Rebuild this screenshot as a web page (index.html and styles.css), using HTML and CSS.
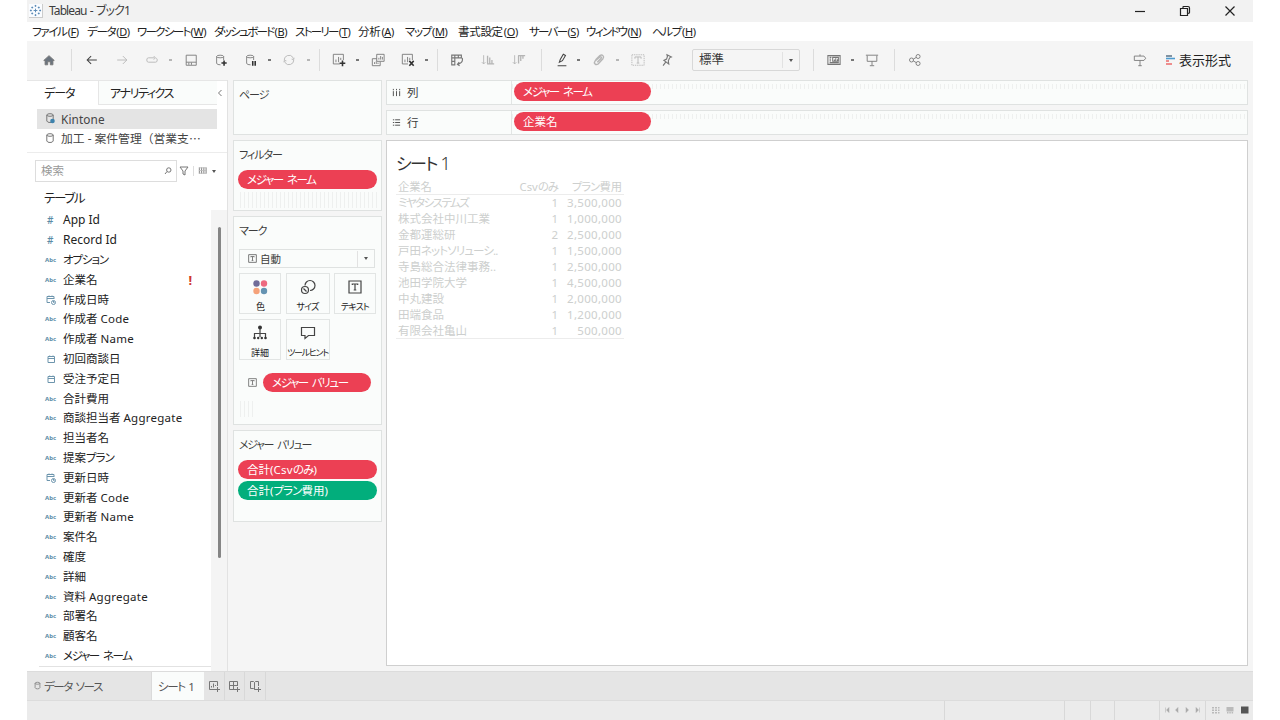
FILE: index.html
```
<!DOCTYPE html>
<html lang="ja">
<head>
    <meta charset="UTF-8">
    <meta name="viewport" content="width=device-width, initial-scale=1.0">
    <title>Tableau - ブック1</title>
    <link rel="stylesheet" href="styles.css">
</head>
<body>
    <!-- icon definitions -->
    <svg class="defs" width="0" height="0">
        <symbol id="home" viewBox="0 0 16 16"><path d="M2 8.500 8 3l6 5.500h-1.500v5h-3V10h-3v3.500h-3v-5z" fill="#6b747e"/></symbol>
        <symbol id="back" viewBox="0 0 16 16"><path d="M13.500 8h-11M7 3.500 2.500 8 7 12.500"/></symbol>
        <symbol id="forward" viewBox="0 0 16 16"><path d="M2.500 8h11M9 3.500 13.500 8 9 12.500"/></symbol>
        <symbol id="loop" viewBox="0 0 16 16"><path d="M11 5.500H4Q2 5.500 2 8t2 2.500h8q2 0 2-2.500 0-1-1-2M10 3.500l2 2-2 2"/></symbol>
        <symbol id="save" viewBox="0 0 16 16"><path d="M2.500 2.500h11.500v11.500H2.500zM2.500 10.500h11.500M5.500 11v2.500M8.500 11v2.500"/></symbol>
        <symbol id="dbadd" viewBox="0 0 16 16"><path d="M3 4v8q1 1.500 4.500 1.500M11 4v4M3 4q0-1.500 4-1.500T11 4 7 5.500 3 4"/><path class="strong" d="M11.500 8.500v6M8.500 11.500h6"/></symbol>
        <symbol id="dbpause" viewBox="0 0 16 16"><path d="M3 4v8q1 1.500 4.500 1.500M11 4v4M3 4q0-1.500 4-1.500T11 4 7 5.500 3 4"/><path class="strong" d="M10 9v5.500M12.800 9v5.500"/></symbol>
        <symbol id="refresh" viewBox="0 0 16 16"><path d="M2.500 8.500a5.500 5.500 0 0 1 10-3.500l.5 1.500M13.500 7.500a5.500 5.500 0 0 1-10 3.500L3 9.500M11 7l2 .500 1-2M2 10.500l1-2 2 .5"/></symbol>
        <symbol id="chartadd" viewBox="0 0 16 16"><path d="M9 12.500H1.500v-11h11.500V8M4.500 10.500V7.500M7.500 10.500v-6M10 8V5.500"/><path class="strong" d="M12 8.500v6.500M8.700 11.800h6.500"/></symbol>
        <symbol id="chartdup" viewBox="0 0 16 16"><path d="M6.500 1.500H15v8H6.500zM6.500 6.500h-5v8h9V10M9 7.500v-2M11 7.500v-4M13 7.500v-3M4 12.500v-2M6 12.500v-3M8 12.500V11"/></symbol>
        <symbol id="chartx" viewBox="0 0 16 16"><path d="M8 12.500H1.500v-11h11.500V8M4.500 10.500V7.500M7.500 10.500v-6M10 8V5.500"/><path class="strong" d="m9.500 9 5 5.500M14.500 9l-5 5.500"/></symbol>
        <symbol id="swap" viewBox="0 0 16 16"><path stroke-width="1.300" d="M2 2.500h11v3H2zM2 5.500h3.500v8H2zM2 9.500h3.500M5.500 2.500v3M9.500 2.500v3M14 5.500q1 4-2 6l-3 1.500M10.500 10.500 8.500 13l2.500 1.500"/></symbol>
        <symbol id="sortasc" viewBox="0 0 16 16"><path d="M3 2.500v10M1 10.500l2 2 2-2"/><path stroke-width="1.500" d="M7.500 3v9M10 5v7M12.500 8v4M7 12.500h8"/></symbol>
        <symbol id="sortdesc" viewBox="0 0 16 16"><path d="M3 2.500v10M1 10.500l2 2 2-2"/><path stroke-width="1.500" d="M7.500 3v9M10 3v6M12.500 3v3.500M7 3h8"/></symbol>
        <symbol id="pen" viewBox="0 0 16 16"><path d="m5 10.500 1-3L9.500 1.500l2.500 1.300-3.500 6L5 10.500zM3 14.500h10"/></symbol>
        <symbol id="clip" viewBox="0 0 16 16"><path stroke-width="1.600" d="m4 8 5-5q2-1.500 3.500 0t0 3.500l-5.500 6q-2 1.500-3.500 0t0-3.500L9 4.500q1-.5 1.500 0T10.500 6L6 10.500"/></symbol>
        <symbol id="label" viewBox="0 0 16 16"><path stroke-dasharray="1.500 1" d="M1 2h14v12H1z"/><path d="M4.500 6.500v-2h7v2M8 4.500v7M6.500 11.500h3"/></symbol>
        <symbol id="pin" viewBox="0 0 16 16"><path stroke-width="1.300" d="m8 2 5 2.500-2 1L9.500 9l.5 3.500-5.500-4L7.500 7 8.500 4zM6.500 10.500l-3 4"/></symbol>
        <symbol id="cards" viewBox="0 0 16 16"><path stroke-width="1.200" d="M1 3h14v10H1zM3 5h2M3 7h1.500M3 9h1.500M3 11h10.500M6.500 5H13v4.500H6.500zM8.500 9V7.500M10 9V6M12 9V7"/></symbol>
        <symbol id="present" viewBox="0 0 16 16"><path d="M1 2.500h14M2.500 3v6.500h11V3M8 9.500V14M5.500 14.500h5"/></symbol>
        <symbol id="share" viewBox="0 0 16 16"><circle cx="4" cy="8" r="2.300"/><circle cx="11.500" cy="4" r="2.300"/><circle cx="11.500" cy="12" r="2.300"/><path d="m6 7 3.500-2M6 9l3.500 2"/></symbol>
        <symbol id="sign" viewBox="0 0 16 16"><path d="M1.500 3.500h11l2 2.500-2 2.500h-11zM8 1.500v2M8 8.500v6M6 14.500h4"/></symbol>
        <symbol id="db" viewBox="0 0 12 12"><ellipse cx="6" cy="3" rx="3.200" ry="1.300"/><path d="M2.800 3v6q.5 1.500 3.200 1.500T9.200 9V3"/></symbol>
        <symbol id="cal" viewBox="0 0 12 12"><path d="M3 3.500h6.500v6H3zM3 5.500h6.500M4.700 2.500v1M8 2.500v1"/></symbol>
        <symbol id="caltime" viewBox="0 0 12 12"><path d="M5 8.500H2v-6h7V5M2 4.500h7M4 1.500v1M7 1.500v1"/><circle cx="8.500" cy="8.500" r="2"/><path d="M8.500 7v1.500h1"/></symbol>
        <symbol id="text" viewBox="0 0 14 14"><path d="M1 1h12v12H1zM4.300 5V4h5.400v1M7 4v6M5.700 10h2.600"/></symbol>
        <symbol id="newsheet" viewBox="0 0 12 12"><path d="M7 9.500H1.500v-8h8V6M3.500 7.500V6M5.500 7.500v-4M7.500 6V5M9.500 7v5M7 9.500h5"/></symbol>
        <symbol id="newdash" viewBox="0 0 12 12"><path d="M7 9.500H1.500v-8h8V6M5.500 1.500v8M1.500 5.500h8M9.500 7v5M7 9.500h5"/></symbol>
        <symbol id="newstory" viewBox="0 0 12 12"><path d="M7 9.500H5.500l-1-1h-3v-7h3l1 1 1-1h3V6M5.500 2.500v7M9.500 7v5M7 9.500h5"/></symbol>
    </svg>

    <div class="app">
        <header class="titlebar">
            <svg class="logo" viewBox="0 0 14 14"><path d="M7 5v4M5 7h4M7 1v2M6 2h2M7 11v2M6 12h2M1 7h2M2 6v2M11 7h2M12 6v2M3.500 2.800v2M2.500 3.800h2M10.500 2.800v2M9.500 3.800h2M3.500 9.200v2M2.500 10.200h2M10.500 9.200v2M9.500 10.200h2"/></svg>
            <span class="title">Tableau - ブック1</span>
            <div class="window-buttons">
                <svg viewBox="0 0 12 12"><path d="M1 6.500h10"/></svg>
                <svg viewBox="0 0 12 12"><path d="M1.500 3.500h7v7h-7zM4 3.500V2q0-.5.500-.5H9Q10.500 1.500 10.500 3v4.500q0 1-2 1"/></svg>
                <svg viewBox="0 0 12 12"><path d="m1.500 1.500 9 9M10.500 1.500l-9 9"/></svg>
            </div>
        </header>

        <nav class="menu">
            <span>ファイル<kbd>(<u>F</u>)</kbd></span>
            <span>データ<kbd>(<u>D</u>)</kbd></span>
            <span class="tight">ワークシート<kbd>(<u>W</u>)</kbd></span>
            <span class="tight">ダッシュボード<kbd>(<u>B</u>)</kbd></span>
            <span class="tight">ストーリー<kbd>(<u>T</u>)</kbd></span>
            <span class="loose">分析<kbd>(<u>A</u>)</kbd></span>
            <span>マップ<kbd>(<u>M</u>)</kbd></span>
            <span class="loose">書式設定<kbd>(<u>O</u>)</kbd></span>
            <span class="tight">サーバー<kbd>(<u>S</u>)</kbd></span>
            <span class="tight">ウィンドウ<kbd>(<u>N</u>)</kbd></span>
            <span>ヘルプ<kbd>(<u>H</u>)</kbd></span>
        </nav>

        <div class="toolbar">
            <svg><use href="#home"/></svg>
            <i class="sep"></i>
            <svg class="dark"><use href="#back"/></svg>
            <svg class="off"><use href="#forward"/></svg>
            <svg class="off"><use href="#loop"/></svg>
            <i class="caret off"></i>
            <svg><use href="#save"/></svg>
            <svg><use href="#dbadd"/></svg>
            <svg><use href="#dbpause"/></svg>
            <i class="caret"></i>
            <svg class="off refresh"><use href="#refresh"/></svg>
            <i class="caret off"></i>
            <i class="sep after-caret"></i>
            <svg><use href="#chartadd"/></svg>
            <i class="caret"></i>
            <svg><use href="#chartdup"/></svg>
            <svg><use href="#chartx"/></svg>
            <i class="caret"></i>
            <i class="sep after-caret"></i>
            <svg><use href="#swap"/></svg>
            <svg class="off sort"><use href="#sortasc"/></svg>
            <svg class="off sort"><use href="#sortdesc"/></svg>
            <i class="sep"></i>
            <svg class="dark pen"><use href="#pen"/></svg>
            <i class="caret"></i>
            <svg class="off"><use href="#clip"/></svg>
            <i class="caret off"></i>
            <svg class="off"><use href="#label"/></svg>
            <svg class="pin"><use href="#pin"/></svg>
            <div class="fit"><span>標準</span><b><i class="arrow"></i></b></div>
            <i class="sep fit-sep"></i>
            <svg><use href="#cards"/></svg>
            <i class="caret"></i>
            <svg class="present"><use href="#present"/></svg>
            <i class="sep share-sep"></i>
            <svg><use href="#share"/></svg>
            <svg class="sign"><use href="#sign"/></svg>
            <div class="showme">
                <svg class="bars" viewBox="0 0 10 10"><path stroke="#62798d" d="M1 1h6"/><path stroke="#4d9bd0" d="M1 3.500h9"/><path stroke="#ec6b6b" d="M1 6h3M1 9h6"/></svg>
                <span>表示形式</span>
            </div>
        </div>

        <main class="workspace">
            <aside class="data-pane">
                <div class="pane-tabs">
                    <span class="pane-tab active">データ</span>
                    <span class="pane-tab other">アナリティクス</span>
                    <svg class="collapse" viewBox="0 0 6 8"><path d="M4.500 1 1.500 4l3 3"/></svg>
                </div>
                <div class="sources">
                    <div class="source selected"><svg class="db" viewBox="0 0 12 12"><use href="#db"/><circle class="dot" cx="8.500" cy="9" r="2.300"/></svg>Kintone</div>
                    <div class="source"><svg class="db"><use href="#db"/></svg>加工 - 案件管理（営業支<span class="dots">…</span></div>
                </div>
                <div class="search-row">
                    <div class="search"><span>検索</span><svg viewBox="0 0 8 8"><circle cx="4.800" cy="3" r="2.200"/><path d="M3 4.500 1 7"/></svg></div>
                    <svg class="filter" viewBox="0 0 10 10"><path d="M1 1h8L6 5v4L4 8V5z"/></svg>
                    <svg class="grid" viewBox="0 0 10 10"><path d="M1.500 1v7M4 1v7M6.500 1v7M9 1v7"/><path class="faint" d="M1 1.500h8M1 4.500h8M1 7.500h8"/></svg>
                    <i class="arrow"></i>
                </div>
                <div class="tables">
                    <div class="fields">
                        <h2>テーブル</h2>
                        <ul>
                            <li><b class="num">#</b>App Id</li>
                            <li><b class="num">#</b>Record Id</li>
                            <li class="kana"><b>Abc</b>オプション</li>
                            <li><b>Abc</b>企業名<em>!</em></li>
                            <li><svg><use href="#caltime"/></svg>作成日時</li>
                            <li><b>Abc</b>作成者 <span class="latin">Code</span></li>
                            <li><b>Abc</b>作成者 <span class="latin">Name</span></li>
                            <li><svg><use href="#cal"/></svg>初回商談日</li>
                            <li><svg><use href="#cal"/></svg>受注予定日</li>
                            <li><b>Abc</b>合計費用</li>
                            <li><b>Abc</b>商談担当者 <span class="latin">Aggregate</span></li>
                            <li><b>Abc</b>担当者名</li>
                            <li><b>Abc</b>提案<span class="kana">プラン</span></li>
                            <li><svg><use href="#caltime"/></svg>更新日時</li>
                            <li><b>Abc</b>更新者 <span class="latin">Code</span></li>
                            <li><b>Abc</b>更新者 <span class="latin">Name</span></li>
                            <li><b>Abc</b>案件名</li>
                            <li><b>Abc</b>確度</li>
                            <li><b>Abc</b>詳細</li>
                            <li><b>Abc</b>資料 <span class="latin">Aggregate</span></li>
                            <li><b>Abc</b>部署名</li>
                            <li><b>Abc</b>顧客名</li>
                            <li class="names"><b>Abc</b>メジャー ネーム</li>
                        </ul>
                    </div>
                    <div class="scroll"><div class="thumb"></div></div>
                </div>
            </aside>

            <section class="cards">
                <div class="card pages"><h3>ページ</h3></div>
                <div class="card filters">
                    <h3>フィルター</h3>
                    <div class="pill names">メジャー ネーム</div>
                    <div class="hatch"></div>
                </div>
                <div class="card marks">
                    <h3>マーク</h3>
                    <div class="mark-type"><svg><use href="#text"/></svg><span>自動</span><b><i class="arrow"></i></b></div>
                    <div class="mark-buttons">
                        <div><svg viewBox="0 0 16 16"><g stroke="none"><circle cx="4.500" cy="4.500" r="3.200" fill="#706c99"/><circle cx="12" cy="4.500" r="3.200" fill="#ed6a80"/><circle cx="4.500" cy="12" r="3.200" fill="#f5a27a"/><circle cx="12" cy="12" r="3.200" fill="#6593b2"/></g></svg>色</div>
                        <div><svg viewBox="0 0 16 16"><path d="M5 6.500a5 5 0 1 1 5 5"/><circle cx="5" cy="11" r="3.500"/><path d="m3.500 9.500 3 3"/></svg>サイズ</div>
                        <div><svg viewBox="-1 -1 16 16"><use href="#text" width="14" height="14"/></svg>テキスト</div>
                        <div><svg viewBox="0 0 16 16"><circle cx="8" cy="2.500" r="2" class="solid"/><path d="M8 4v8M2.500 12V8.500h11V12"/><circle cx="2.500" cy="13" r="1.300" class="solid"/><circle cx="6.200" cy="13" r="1.200" class="solid"/><circle cx="9.800" cy="13" r="1.200" class="solid"/><circle cx="13.500" cy="13" r="1.300" class="solid"/></svg><span class="kanji">詳細</span></div>
                        <div class="tooltip"><svg viewBox="0 0 16 16"><path d="M1.500 2.500h13v8H8.500L5 13.500v-3H1.500z"/></svg>ツールヒント</div>
                    </div>
                    <div class="mark-row"><svg><use href="#text"/></svg><div class="pill names">メジャー バリュー</div></div>
                    <div class="hatch short"></div>
                </div>
                <div class="card values">
                    <h3 class="names">メジャー バリュー</h3>
                    <div class="pill">合計(<span class="latin">Csv</span><span class="kana">のみ</span>)</div>
                    <div class="pill green">合計(<span class="kana">プラン</span>費用)</div>
                </div>
            </section>

            <section class="view">
                <div class="shelf">
                    <div class="shelf-name"><svg viewBox="0 0 10 10"><path d="M1.500 1v1.500M5 1v1.500M8.500 1v1.500M1.500 3.500V9M5 3.500V9M8.500 3.500V9"/></svg>列</div>
                    <div class="drop"><div class="pill names">メジャー ネーム</div></div>
                </div>
                <div class="shelf">
                    <div class="shelf-name"><svg viewBox="0 0 10 10"><path d="M1 2h1.500M1 5h1.500M1 8h1.500M3.500 2H9M3.500 5H9M3.500 8H9"/></svg>行</div>
                    <div class="drop"><div class="pill">企業名</div></div>
                </div>
                <div class="sheet">
                    <h1>シート <span>1</span></h1>
                    <table>
                        <thead><tr><th>企業名</th><th>Csv<span class="kana">のみ</span></th><th><span class="kana">プラン</span>費用</th></tr></thead>
                        <tbody>
                            <tr><td class="kana">ミヤタシステムズ</td><td>1</td><td>3,500,000</td></tr>
                            <tr><td>株式会社中川工業</td><td>1</td><td>1,000,000</td></tr>
                            <tr><td>金都運総研</td><td>2</td><td>2,500,000</td></tr>
                            <tr><td>戸田<span class="kana">ネットソリューシ..</span></td><td>1</td><td>1,500,000</td></tr>
                            <tr><td>寺島総合法律事務..</td><td>1</td><td>2,500,000</td></tr>
                            <tr><td>池田学院大学</td><td>1</td><td>4,500,000</td></tr>
                            <tr><td>中丸建設</td><td>1</td><td>2,000,000</td></tr>
                            <tr><td>田端食品</td><td>1</td><td>1,200,000</td></tr>
                            <tr><td>有限会社亀山</td><td>1</td><td>500,000</td></tr>
                        </tbody>
                    </table>
                </div>
            </section>
        </main>

        <div class="sheet-tabs">
            <div class="datasource"><svg><use href="#db"/></svg>データ ソース</div>
            <div class="sheet-tab">シート 1</div>
            <div class="new"><svg><use href="#newsheet"/></svg></div>
            <div class="new"><svg><use href="#newdash"/></svg></div>
            <div class="new"><svg><use href="#newstory"/></svg></div>
        </div>
        <footer class="status">
            <i class="s1"></i><i class="s2"></i><i class="s3"></i><i class="s4"></i>
            <div class="pager">
                <svg viewBox="0 0 36 8"><path d="M1.500 1.500v5M5 1.500v5L2.500 4zM14 1.500v5L11.500 4zM22 1.500v5L24.500 4zM32 1.500v5L34.500 4zM35.500 1.500v5"/></svg>
            </div>
            <div class="modes">
                <svg viewBox="0 0 38 8"><path fill="#bababa" d="M1 1h2v1.500H1zM4 1h2v1.500H4zM7 1h1.500v1.500H7zM1 3.500h2V5H1zM4 3.500h2V5H4zM7 3.500h1.500V5H7zM1 6h2v1.500H1zM4 6h2v1.500H4zM7 6h1.500v1.500H7zM15.500 1h7v4.500h-7zM16 6h1.500v1.500H16zM18.300 6h1.500v1.500h-1.500zM20.600 6h1.500v1.500h-1.500z"/><path fill="#555" d="M30 .5h7.500v7H30z"/></svg>
            </div>
        </footer>
    </div>
</body>
</html>
```
FILE: styles.css
```
* {
    box-sizing: border-box;
}

body {
    margin: 0;
    background: #fff;
    color: #3c3c3c;
    font-family: "Noto Sans", "Noto Sans CJK JP", sans-serif;
    font-size: 11.5px;
    line-height: 16px;
    overflow: hidden;
}

h1, h2, h3, ul {
    margin: 0;
    padding: 0;
    font-weight: normal;
}

svg {
    display: block;
    flex: none;
    fill: none;
    stroke: #777;
    stroke-width: 1;
}

.defs {
    position: absolute;
}

.strong {
    stroke: #333;
    stroke-width: 1.8;
}

.kana {
    font-feature-settings: "palt";
    letter-spacing: -0.9px;
}

.latin {
    letter-spacing: 0.25px;
}

.app {
    width: 1226px;
    height: 720px;
    margin-left: 27px;
    display: flex;
    flex-direction: column;
    background: #f5f5f5;
}

/* title bar and menu */
.titlebar {
    height: 22px;
    padding-left: 2px;
    display: flex;
    align-items: center;
    background: #f2f2f2;
}

.logo {
    width: 14px;
    height: 14px;
    background: #fafcff;
    border-right: 1px solid #ccc;
    border-bottom: 1px solid #ccc;
    stroke: #5788b4;
}

.title {
    margin-left: 6px;
    font-size: 12px;
    letter-spacing: -0.9px;
    word-spacing: 1px;
    font-feature-settings: "palt";
}

.window-buttons {
    margin-left: auto;
    margin-right: 17px;
    display: flex;
    gap: 32.5px;
}

.window-buttons svg {
    width: 12px;
    height: 12px;
    margin-top: -1px;
    stroke: #222;
    stroke-width: 1.2;
}

.window-buttons svg:not(:last-child) {
    margin-left: -1px;
    margin-right: 1px;
}

.menu {
    height: 19px;
    padding: 1px 0 0 5px;
    display: grid;
    grid-template-columns: 55px 50px 77px 81px 63px 47px 53px 71px 57px 66px auto;
    align-items: center;
    background: #fff;
    font-feature-settings: "palt";
    letter-spacing: -1.3px;
    white-space: nowrap;
    color: #222;
}

.menu .tight {
    letter-spacing: -1.7px;
}

.menu .loose {
    letter-spacing: -0.3px;
}

.menu kbd {
    margin-left: 1px;
    font-family: inherit;
    font-size: 11px;
    letter-spacing: -0.4px;
}

.menu u {
    text-underline-offset: 1px;
}

/* toolbar */
.toolbar {
    height: 39px;
    padding: 0 0 1px 14px;
    display: flex;
    align-items: center;
    gap: 14px;
}

.toolbar svg {
    width: 16px;
    height: 16px;
    padding: 1px;
}

.toolbar .dark {
    stroke: #444;
    stroke-width: 1.2;
}

.toolbar .off {
    opacity: 0.5;
}

.toolbar .refresh {
    margin-left: -1px;
    margin-right: 1px;
}

.toolbar .sort {
    margin: 0 0 0 1px;
}

.sep {
    flex: none;
    width: 1px;
    height: 22px;
    margin-right: -2px;
    background: #dcdcdc;
}

.after-caret {
    margin: 0 -3px 0 -2px;
}

.caret {
    flex: none;
    width: 5px;
    margin: 0 -4px 0 -6px;
}

.caret::before {
    content: "";
    display: block;
    width: 3px;
    height: 2px;
    margin-left: 1px;
    background: #777;
}

.arrow {
    width: 0;
    height: 0;
    border: 2.5px solid transparent;
    border-top: 3px solid #555;
    border-bottom: 0;
}

.toolbar .pen {
    margin: 0 -2px 0 0;
}

.toolbar .pin {
    margin-left: -1px;
}

.fit {
    width: 108px;
    height: 22px;
    margin-left: 3px;
    padding-left: 6px;
    display: flex;
    align-items: center;
    justify-content: space-between;
    border: 1px solid #d8d8d8;
    border-radius: 2px;
    font-size: 12.5px;
    line-height: 24px;
}

.fit b,
.mark-type b {
    width: 17px;
    height: 16px;
    display: grid;
    place-items: center;
    border-left: 1px solid #e2e2e2;
}

.fit-sep {
    margin-left: -1px;
}

.toolbar .present {
    margin-left: -1px;
}

.share-sep {
    margin-right: -2px;
}

.toolbar .sign {
    margin-left: auto;
    margin-right: 3px;
}

.showme {
    display: flex;
    align-items: center;
    gap: 4px;
    margin-right: 22px;
    color: #222;
    font-size: 13px;
}

.toolbar .bars {
    width: 10px;
    height: 10px;
    padding: 0;
    stroke-width: 1.6;
}

/* workspace */
.workspace {
    height: 591px;
    display: flex;
}

.data-pane {
    width: 201px;
    height: 591px;
    display: flex;
    flex-direction: column;
    background: #fff;
    border-right: 1px solid #e2e2e2;
}

.pane-tabs {
    height: 25px;
    display: flex;
    border-top: 1px solid #e6e6e6;
    font-size: 12px;
    line-height: 26px;
    color: #222;
    letter-spacing: -1.4px;
    font-feature-settings: "palt";
}

.active {
    width: 72px;
    padding-left: 17px;
    border-right: 1px solid #e6e6e6;
    letter-spacing: -1px;
}

.other {
    width: 118px;
    padding-left: 11px;
    background: #fafcfb;
    border-bottom: 1px solid #e6e6e6;
}

.collapse {
    width: 6px;
    height: 8px;
    margin-top: 8px;
}

.sources {
    height: 48px;
    padding: 4px 0 0 10px;
    border-bottom: 1px solid #ececec;
}

.source {
    width: 180px;
    height: 19.5px;
    padding-left: 7px;
    display: flex;
    align-items: center;
    gap: 5px;
    font-size: 11.8px;
    white-space: pre;
    color: #444;
}

.source.selected {
    background: #e4e4e4;
    letter-spacing: 0.1px;
}

.dots {
    margin-left: -5px;
    font-family: "Noto Sans CJK JP", sans-serif;
}

.db {
    width: 12px;
    height: 12px;
    margin-top: -1px;
}

.dot {
    fill: #3e83ad;
    stroke: none;
}

.search-row {
    height: 35px;
    padding: 1px 0 0 8px;
    display: flex;
    align-items: center;
}

.search {
    width: 142px;
    height: 22px;
    padding: 0 4px 0 5px;
    display: flex;
    align-items: center;
    justify-content: space-between;
    border: 1px solid #ddd;
    color: #999;
}

.search svg {
    width: 8px;
    height: 8px;
}

.filter {
    width: 10px;
    height: 10px;
    margin-left: 2px;
}

.grid {
    width: 14px;
    height: 10px;
    padding-left: 4px;
    margin-left: 4px;
    border-left: 1px solid #ddd;
}

.faint {
    stroke: #bbb;
}

.search-row .arrow {
    margin-left: 5px;
}

.tables {
    flex: 1;
    display: flex;
}

.fields {
    width: 184px;
    height: 479px;
}

h2 {
    height: 22px;
    padding: 3px 0 0 17px;
    font-size: 12.5px;
    letter-spacing: -1.3px;
    font-feature-settings: "palt";
    color: #222;
}

.fields ul {
    list-style: none;
    margin-left: 12px;
    padding-top: 0.5px;
    border-bottom: 1px solid #e2e2e2;
}

.fields li {
    height: 19.81px;
    display: flex;
    align-items: center;
    white-space: pre;
    color: #222;
}

.fields li:nth-child(-n+2) {
    font-size: 12px;
}

.fields li.kana {
    letter-spacing: -1.9px;
}

.fields li.kana {
    letter-spacing: -1.1px;
}

.fields li b {
    width: 24px;
    padding-left: 6px;
    color: #5a8ba6;
    font-size: 6px;
    letter-spacing: 0;
}

.fields li b.num {
    padding-left: 8px;
    font-size: 10px;
    font-weight: 500;
}

.fields li svg {
    width: 12px;
    height: 12px;
    margin: 0 6px;
    stroke: #6d95ad;
}

.fields em {
    margin-left: 91px;
    color: #d0392b;
    font-style: normal;
    font-weight: bold;
    font-size: 13px;
}

.scroll {
    width: 16px;
    height: 461px;
    margin-top: 22px;
    padding: 17px 0 0 7px;
    background: #f4f4f4;
}

.thumb {
    width: 3px;
    height: 331px;
    border-radius: 2px;
    background: #858585;
}

/* shelves and cards */
.cards {
    width: 158px;
    padding: 0 4px 0 5px;
    display: flex;
    flex-direction: column;
    gap: 5px;
}

.card {
    width: 149px;
    padding: 6px 4px 0;
    border: 1px solid #dfe2e1;
    background: #fafcfb;
}

.card h3 {
    height: 18px;
    padding-left: 1px;
    font-size: 11px;
    letter-spacing: -1.1px;
    font-feature-settings: "palt";
}

.names,
.card h3.names {
    font-feature-settings: "palt";
    letter-spacing: -1.4px;
    word-spacing: 2.5px;
}

.pages { height: 55px; }
.filters { height: 71px; }
.marks { height: 209px; }
.values { height: 92px; }

.filters h3,
.values h3 {
    height: 22.5px;
}

.pill {
    width: 139px;
    height: 19px;
    padding-left: 9px;
    border-radius: 10px;
    background: #ec4054;
    color: #fff;
    line-height: 19px;
    white-space: pre;
}

.green {
    margin-top: 2px;
    background: #02ae7c;
}

.hatch {
    width: 137px;
    height: 16px;
    margin: 3px 0 0 2px;
    background: repeating-linear-gradient(90deg, #eef0ef 0 1px, transparent 1px 4px);
}

.mark-type {
    width: 136px;
    height: 19px;
    margin: 8px 0 0 1px;
    padding-left: 8px;
    display: flex;
    align-items: center;
    border: 1px solid #dfe2e1;
    font-size: 10.5px;
}

.mark-type svg {
    width: 9px;
    height: 9px;
    margin-right: 3px;
    stroke-width: 1.5;
}

.mark-type b {
    margin-left: auto;
}

.mark-buttons {
    margin: 5px 0 0 1px;
    display: grid;
    grid-template-columns: 42px 44px 42px;
    grid-auto-rows: 41px;
    gap: 5px 4.500px;
    font-size: 9px;
    letter-spacing: -0.8px;
    font-feature-settings: "palt";
}

.mark-buttons div {
    padding-top: 5px;
    display: flex;
    flex-direction: column;
    align-items: center;
    gap: 5px;
    border: 1px solid #e2e5e4;
    line-height: 14px;
    white-space: nowrap;
    color: #222;
}

.mark-buttons .tooltip {
    letter-spacing: -1.3px;
}

.mark-buttons svg {
    width: 16px;
    height: 16px;
    stroke: #444;
    stroke-width: 1.2;
}

.mark-buttons .kanji {
    letter-spacing: 0;
}

.solid {
    fill: #333;
    stroke: none;
}

.mark-row {
    margin: 13px 0 0 10px;
    display: flex;
    align-items: center;
    gap: 6px;
}

.mark-row svg {
    width: 9px;
    height: 9px;
    stroke-width: 1.4;
}

.mark-row .pill {
    width: 108px;
}

.hatch.short {
    width: 14px;
    margin-top: 9px;
}

.view {
    width: 862px;
}

.shelf {
    height: 25px;
    margin-bottom: 5px;
    display: flex;
    border: 1px solid #dfe2e1;
    background: #fafcfb;
}

.shelf-name {
    width: 125px;
    padding-left: 5px;
    display: flex;
    align-items: center;
    gap: 6px;
    border-right: 1px solid #e2e5e4;
}

.shelf-name svg {
    width: 9px;
    height: 9px;
    stroke: #444;
}

.drop {
    flex: 1;
    padding: 1.400px 0 0 2px;
    background: repeating-linear-gradient(90deg, #eef0ef 0 1px, transparent 1px 4px) 0 3px / 100% 5px no-repeat;
}

.drop .pill {
    width: 137px;
}

.sheet {
    height: 526px;
    padding: 10px 9px;
    border: 1px solid #cfcfcf;
    background: #fff;
}

h1 {
    height: 29px;
    font-size: 17px;
    line-height: 24px;
    letter-spacing: -1.6px;
    font-feature-settings: "palt";
    color: #333;
}

h1 span {
    margin-left: 1px;
    font-size: 18px;
    font-weight: 300;
}

table {
    width: 228px;
    table-layout: fixed;
    border-collapse: collapse;
    border-bottom: 1px solid #ececec;
    color: #cdcfce;
}

th,
td {
    height: 16px;
    padding: 0 2px;
    font-weight: normal;
    line-height: 15px;
    text-align: right;
    white-space: nowrap;
}

td:last-child {
    letter-spacing: 0.3px;
}

th {
    height: 14px;
    font-size: 11.3px;
    line-height: 14px;
    border-bottom: 1px solid #ececec;
}

th:first-child,
td:first-child {
    width: 114px;
    text-align: left;
}

th:nth-child(2),
td:nth-child(2) {
    width: 50px;
}

td.kana {
    letter-spacing: -1.6px;
}

/* bottom bars */
.sheet-tabs {
    height: 29px;
    display: flex;
    background: #e5e5e5;
    border-top: 1px solid #dcdcdc;
    color: #555;
    font-size: 11.5px;
    line-height: 30px;
    letter-spacing: -1.4px;
    word-spacing: 2px;
    font-feature-settings: "palt";
}

.datasource {
    width: 125px;
    padding-left: 6px;
    display: flex;
    gap: 2px;
    border-right: 1px solid #dadada;
}

.datasource svg {
    width: 9px;
    height: 9px;
    margin-top: 9px;
}

.sheet-tab {
    width: 52px;
    padding-left: 6px;
    background: #fafcfb;
}

.new {
    width: 20.500px;
    display: grid;
    place-items: center;
    border-right: 1px solid #d8d8d8;
}

.new svg {
    width: 12px;
    height: 12px;
}

.status {
    height: 20px;
    display: flex;
    justify-content: flex-end;
    background: #ebebeb;
    border-top: 1px solid #dcdcdc;
}

.status > * {
    border-left: 1px solid #d8d8d8;
}

.s1 { width: 120px; }
.s2 { width: 26px; }
.s3 { width: 24px; }
.s4 { width: 45px; }

.pager {
    width: 46px;
    padding: 5px 0 0 4px;
}

.pager svg {
    width: 36px;
    height: 8px;
    fill: #aaa;
    stroke: #aaa;
    stroke-width: 0.5;
}

.modes {
    width: 48px;
    padding: 5px 0 0 5px;
}

.modes svg {
    width: 38px;
    height: 8px;
    stroke: none;
}
```
